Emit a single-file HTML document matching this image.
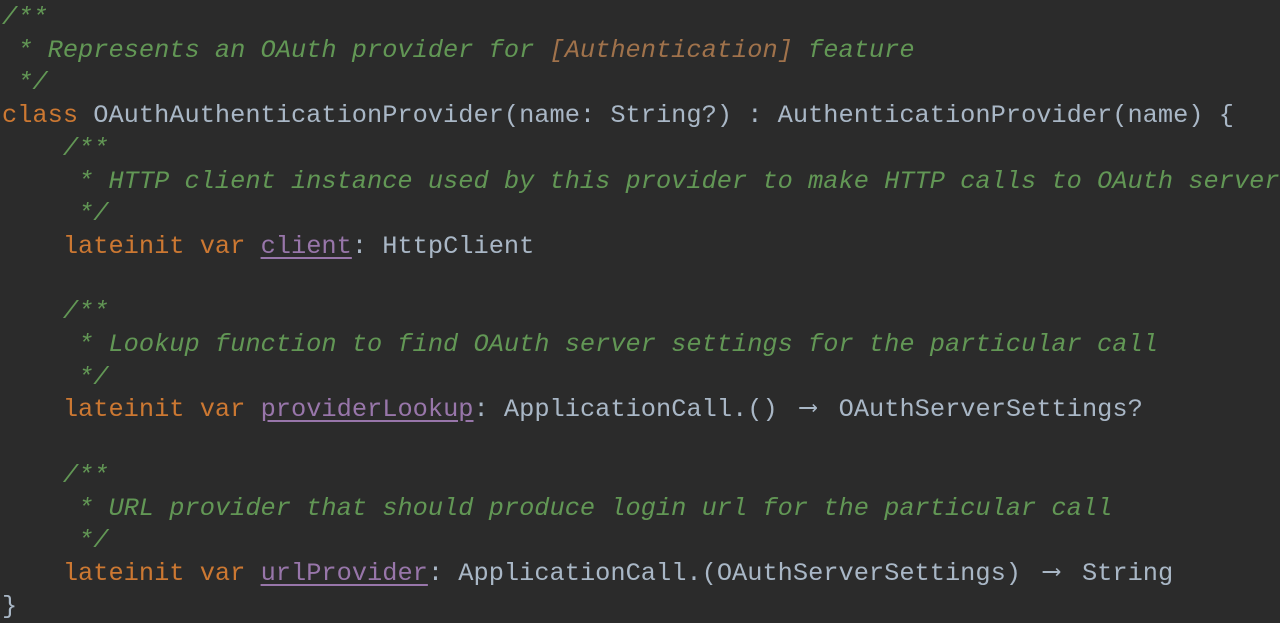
<!DOCTYPE html>
<html><head><meta charset="utf-8"><style>
html,body{margin:0;padding:0;background:#2b2b2b;width:1280px;height:623px;overflow:hidden}
pre{margin:0;padding:2px 0 0 2px;font-family:"Liberation Mono","DejaVu Sans Mono",monospace;font-size:25.35px;line-height:32.7px;color:#a9b7c6;white-space:pre}
.c{color:#629755;font-style:italic}
.r{color:#a0724b;font-style:italic}
.k{color:#cc7832}
.p{color:#9876aa;text-decoration:underline;text-underline-offset:4px}
.a{display:inline-block;width:2ch;height:20px;line-height:20px;vertical-align:1px;text-align:center;font-family:"DejaVu Sans Mono",monospace}
</style></head><body><pre><span class="c">/**
 * Represents an OAuth provider for </span><span class="r">[Authentication]</span><span class="c"> feature
 */</span>
<span class="k">class</span> OAuthAuthenticationProvider(name: String?) : AuthenticationProvider(name) {
    <span class="c">/**
     * HTTP client instance used by this provider to make HTTP calls to OAuth server
     */</span>
    <span class="k">lateinit var</span> <span class="p">client</span>: HttpClient

    <span class="c">/**
     * Lookup function to find OAuth server settings for the particular call
     */</span>
    <span class="k">lateinit var</span> <span class="p">providerLookup</span>: ApplicationCall.() <span class="a">⟶</span> OAuthServerSettings?

    <span class="c">/**
     * URL provider that should produce login url for the particular call
     */</span>
    <span class="k">lateinit var</span> <span class="p">urlProvider</span>: ApplicationCall.(OAuthServerSettings) <span class="a">⟶</span> String
}</pre></body></html>
